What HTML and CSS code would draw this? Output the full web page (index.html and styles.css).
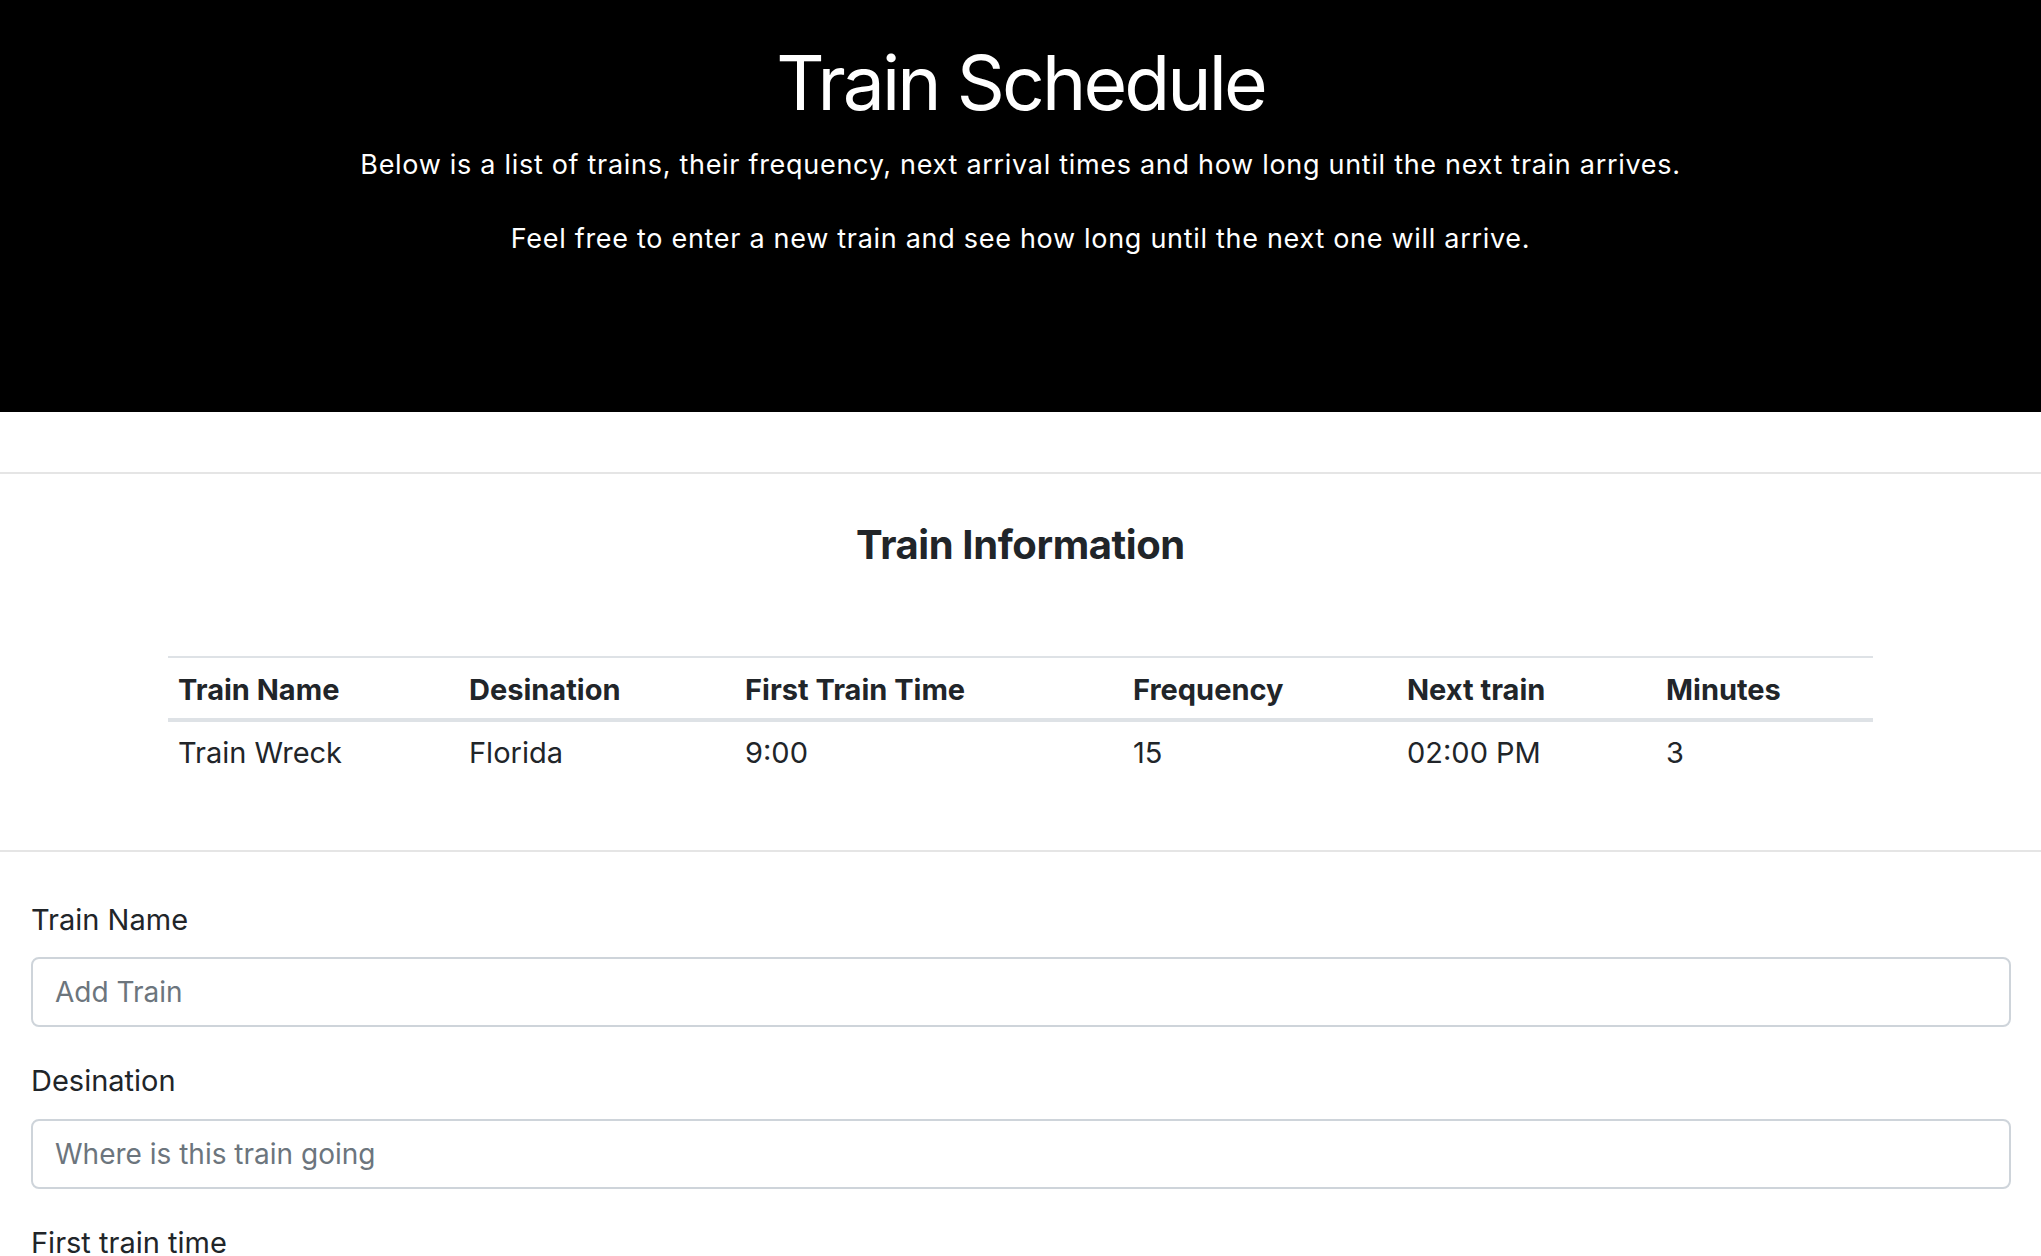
FILE: index.html
```html
<!DOCTYPE html>
<html lang="en">
<head>
<meta charset="utf-8">
<title>Train Schedule</title>
<link rel="stylesheet" href="styles.css">
</head>
<body>
<header class="jumbo">
  <h1 class="title">Train Schedule</h1>
  <p class="lead">Below is a list of trains, their frequency, next arrival times and how long until the next train arrives.</p>
  <p class="lead lead-2">Feel free to enter a new train and see how long until the next one will arrive.</p>
</header>
<hr class="rule rule-top">
<section class="info">
  <h2 class="info-title">Train Information</h2>
  <table class="trains">
    <thead>
      <tr>
        <th class="c1">Train Name</th>
        <th class="c2">Desination</th>
        <th class="c3">First Train Time</th>
        <th class="c4">Frequency</th>
        <th class="c5">Next train</th>
        <th class="c6">Minutes</th>
      </tr>
    </thead>
    <tbody>
      <tr>
        <td>Train Wreck</td>
        <td>Florida</td>
        <td>9:00</td>
        <td>15</td>
        <td>02:00 PM</td>
        <td>3</td>
      </tr>
    </tbody>
  </table>
</section>
<hr class="rule rule-mid">
<form class="train-form">
  <div class="group">
    <label class="lbl" for="name">Train Name</label>
    <input class="field" id="name" type="text" placeholder="Add Train">
  </div>
  <div class="group">
    <label class="lbl" for="dest">Desination</label>
    <input class="field" id="dest" type="text" placeholder="Where is this train going">
  </div>
  <div class="group">
    <label class="lbl" for="first">First train time</label>
    <input class="field" id="first" type="text" placeholder="HH:mm - military time">
  </div>
  <div class="group">
    <label class="lbl" for="freq">Frequency</label>
    <input class="field" id="freq" type="text" placeholder="How often does the train arrive (in minutes)">
  </div>
  <button class="submit" type="button">Submit</button>
</form>
</body>
</html>
```

FILE: styles.css
```css
html, body {
  margin: 0;
  padding: 0;
  background: #fff;
}
body {
  font-family: Inter, "Noto Sans", "Liberation Sans", sans-serif;
  color: #212529;
}
.jumbo {
  background: #000;
  color: #fff;
  text-align: center;
  height: 412px;
  box-sizing: border-box;
  padding-top: 38px;
}
.title {
  margin: 0;
  font-size: 75px;
  line-height: 90px;
  font-weight: 400;
  letter-spacing: -2.9px;
}
.lead {
  margin: 17px 0 0;
  font-size: 27px;
  line-height: 39px;
  font-weight: 400;
  letter-spacing: 0.7px;
}
.lead-2 {
  margin-top: 35px;
}
.rule {
  border: 0;
  border-top: 2px solid rgba(0, 0, 0, 0.1);
  height: 0;
  margin: 0;
}
.rule-top {
  margin-top: 60px;
}
.info {
  padding-top: 47px;
}
.info-title {
  margin: 0;
  text-align: center;
  font-size: 40px;
  line-height: 48px;
  font-weight: 700;
  letter-spacing: -0.4px;
}
.trains {
  margin: 87px auto 0;
  width: 1705px;
  table-layout: fixed;
  border-collapse: collapse;
  border-top: 2px solid #dee2e6;
  font-size: 29px;
  text-align: left;
}
.trains th {
  box-sizing: border-box;
  font-weight: 700;
  line-height: 43.5px;
  padding: 10px 10px 6.5px;
  border-bottom: 4px solid #dee2e6;
  vertical-align: bottom;
}
.trains td {
  font-weight: 400;
  line-height: 43.5px;
  padding: 9px 10px;
}
.c1 { width: 291px; }
.c2 { width: 276px; }
.c3 { width: 388px; }
.c4 { width: 274px; }
.c5 { width: 259px; }
.c6 { width: 217px; }
.rule-mid {
  margin-top: 66px;
}
.train-form {
  padding: 46px 30px 40px 31px;
}
.group {
  display: flex;
  flex-direction: column;
  margin-bottom: 32px;
}
.lbl {
  font-size: 29px;
  line-height: 43.5px;
  margin-bottom: 16px;
}
.field {
  display: block;
  box-sizing: border-box;
  width: 100%;
  height: 70px;
  border: 2px solid #ced4da;
  border-radius: 8px;
  padding: 0 22px;
  font-family: Inter, "Noto Sans", "Liberation Sans", sans-serif;
  font-size: 28px;
  color: #495057;
  background: #fff;
}
.field::placeholder {
  color: #6c757d;
  opacity: 1;
}
.submit {
  font-family: Inter, "Noto Sans", "Liberation Sans", sans-serif;
  font-size: 28px;
  padding: 12px 24px;
  border: 2px solid #007bff;
  border-radius: 8px;
  background: #007bff;
  color: #fff;
}
```
